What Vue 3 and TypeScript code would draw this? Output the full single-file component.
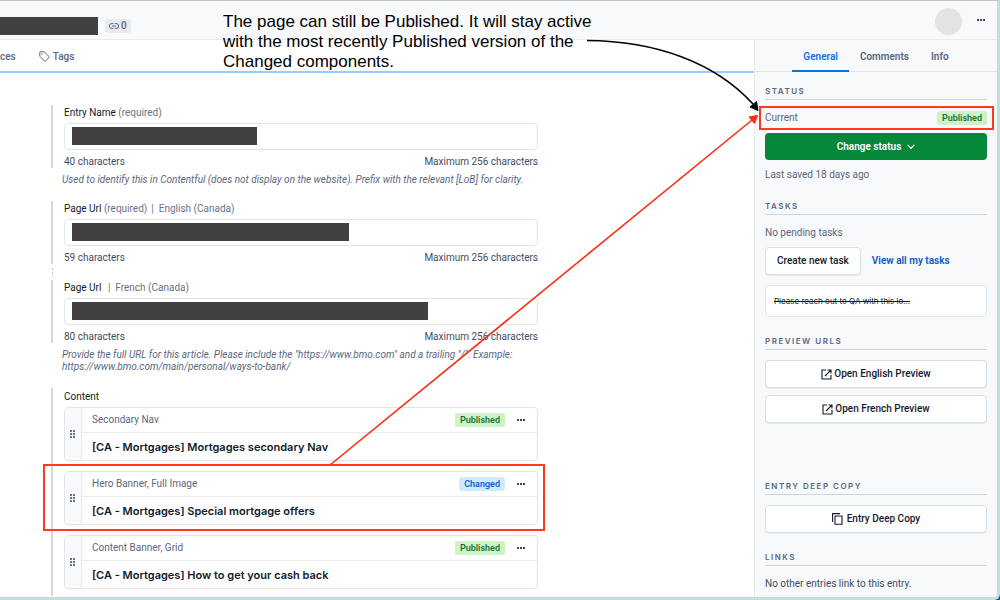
<script setup lang="ts">
interface Field {
  id: string
  label: string
  required: boolean
  locale: string
  count: number
  redacted: number
  hint: string
  linked: boolean
}

interface Entry {
  type: string
  title: string
  status: 'Published' | 'Changed'
}

const fields: Field[] = [
  {
    id: 'entry-name',
    label: 'Entry Name',
    required: true,
    locale: '',
    count: 40,
    redacted: 185,
    hint: 'Used to identify this in Contentful (does not display on the website). Prefix with the relevant [LoB] for clarity.',
    linked: false,
  },
  { id: 'url-en', label: 'Page Url', required: true, locale: 'English (Canada)', count: 59, redacted: 277, hint: '', linked: true },
  {
    id: 'url-fr',
    label: 'Page Url',
    required: false,
    locale: 'French (Canada)',
    count: 80,
    redacted: 356,
    hint: 'Provide the full URL for this article. Please include the "https://www.bmo.com" and a trailing "/". Example: https://www.bmo.com/main/personal/ways-to-bank/',
    linked: false,
  },
]

const entries: Entry[] = [
  { type: 'Secondary Nav', title: '[CA - Mortgages] Mortgages secondary Nav', status: 'Published' },
  { type: 'Hero Banner, Full Image', title: '[CA - Mortgages] Special mortgage offers', status: 'Changed' },
  { type: 'Content Banner, Grid', title: '[CA - Mortgages] How to get your cash back', status: 'Published' },
]
</script>

<template>
  <div class="page">
    <div class="frame">
      <header class="topbar">
        <span class="title-redacted"></span>
        <span class="link-count">
          <svg width="10" height="8" viewBox="0 0 10 8" fill="none" stroke="currentColor" stroke-width="1">
            <path d="M4.3 1.5H2.9a2.4 2.4 0 0 0 0 5h1.4M5.7 1.5h1.4a2.4 2.4 0 0 1 0 5H5.7M3 4h4" />
          </svg>
          0
        </span>
        <span class="avatar"></span>
        <button class="dots" aria-label="More actions"><i></i><i></i><i></i></button>
      </header>

      <div class="columns">
        <main class="editor">
          <nav class="editor-tabs">
            <a href="#">ces</a>
            <a href="#">
              <svg width="11" height="11" viewBox="0 0 11 11" fill="none" stroke="currentColor" stroke-width="1" stroke-linejoin="round">
                <path d="M.8 1.2 1.2.8 5.4.8 10 5.6a.8.8 0 0 1 0 1L6.5 10a.8.8 0 0 1-1 0L.8 5.2z" />
                <circle cx="3" cy="3" r=".7" fill="currentColor" stroke="none" />
              </svg>
              Tags
            </a>
          </nav>

          <div class="form">
            <template v-for="f in fields" :key="f.id">
              <div class="field">
                <label class="label" :for="f.id">
                  {{ f.label }} <span v-if="f.required" class="muted">(required)</span>
                  <span v-if="f.locale" class="muted"><span class="bar">|</span>{{ f.locale }}</span>
                </label>
                <div class="input-wrap">
                  <input :id="f.id" type="text" />
                  <span class="redacted" :style="{ width: f.redacted + 'px' }"></span>
                </div>
                <div class="counts"><span>{{ f.count }} characters</span><span>Maximum 256 characters</span></div>
              </div>
              <div v-if="f.linked" class="link-dots"></div>
              <p v-if="f.hint" class="hint">{{ f.hint }}</p>
            </template>

            <div class="field content">
              <div class="label">Content</div>
              <div class="cards">
                <article v-for="e in entries" :key="e.title" class="card" :class="{ marked: e.status === 'Changed' }">
                  <div class="handle">
                    <svg width="6" height="8" viewBox="0 0 6 8" fill="#66738a">
                      <path d="M0 0h2v2H0zM3 0h2v2H3zM0 3h2v2H0zM3 3h2v2H3zM0 6h2v2H0zM3 6h2v2H3z" />
                    </svg>
                  </div>
                  <div class="card-main">
                    <div class="card-head">
                      <span class="type">{{ e.type }}</span>
                      <span class="badge" :class="e.status.toLowerCase()">{{ e.status }}</span>
                      <button class="dots" aria-label="Entry actions"><i></i><i></i><i></i></button>
                    </div>
                    <h3>{{ e.title }}</h3>
                  </div>
                </article>
              </div>
            </div>
          </div>
        </main>

        <aside class="sidebar">
          <nav class="side-tabs">
            <a href="#" class="active">General</a>
            <a href="#">Comments</a>
            <a href="#">Info</a>
          </nav>
          <div class="side-body">
            <section>
              <h2>Status</h2>
              <div class="status-row marked">
                <span>Current</span><span class="badge published">Published</span>
              </div>
              <button class="primary">
                Change status
                <svg width="8" height="6" viewBox="0 0 8 6" fill="none" stroke="currentColor" stroke-width="1.2" stroke-linecap="round">
                  <path d="M1 1.2 4 4.4 7 1.2" />
                </svg>
              </button>
              <p class="saved">Last saved 18 days ago</p>
            </section>

            <section>
              <h2>Tasks</h2>
              <p class="text">No pending tasks</p>
              <div class="task-actions">
                <button class="secondary">Create new task</button>
                <a href="#">View all my tasks</a>
              </div>
              <div class="task"><s>Please reach out to QA with this lo...</s></div>
            </section>

            <section class="previews">
              <h2>Preview URLs</h2>
              <div class="stack">
                <button v-for="lang in ['English', 'French']" :key="lang" class="secondary">
                  <svg width="11" height="11" viewBox="0 0 11 11" fill="none" stroke="currentColor" stroke-width="1.1">
                    <path d="M5 1H1v9h9V6M6.5 1H10v3.500M10 1 4 7" />
                  </svg>
                  Open {{ lang }} Preview
                </button>
              </div>
            </section>

            <section>
              <h2>Entry deep copy</h2>
              <div class="stack">
                <button class="secondary copy">
                  <svg width="11" height="12" viewBox="0 0 11 12" fill="none" stroke="currentColor" stroke-width="1.1">
                    <path d="M.6 9V.6H8M3 3h7v8.300H3z" />
                  </svg>
                  Entry Deep Copy
                </button>
              </div>
            </section>

            <section>
              <h2>Links</h2>
              <p class="text dark">No other entries link to this entry.</p>
            </section>
          </div>
        </aside>
      </div>
    </div>

    <p class="note">
      The page can still be Published. It will stay active<br />with the most recently Published version of the<br />Changed components.
    </p>
    <svg class="arrows" width="1000" height="600" viewBox="0 0 1000 600" fill="none">
      <path d="M587 40.500C655 41 715 62 753 104" stroke="#000" stroke-width="1.600" />
      <path d="M758 110.500 750 107 756.500 101.500z" fill="#000" stroke="#000" />
      <path d="M330 465 752 120" stroke="#fb2c12" stroke-width="1.600" />
      <path d="M757.500 115.500 749 117 754.500 123.500z" fill="#fb2c12" stroke="#fb2c12" />
    </svg>
  </div>
</template>

<style>
body {
  margin: 0;
}
</style>

<style scoped>
* {
  box-sizing: border-box;
}
.page {
  position: relative;
  display: flex;
  min-height: 100vh;
  padding-bottom: 1px;
  overflow: hidden;
  font-family: Roboto, "Liberation Sans", sans-serif;
  font-size: 10px;
  line-height: 14px;
  color: #5a6780;
  background: linear-gradient(to right, #f0f6f8 calc(100% - 5px), #1d5f8c 0);
}
.frame {
  flex: 1;
  display: flex;
  flex-direction: column;
  background: #fff;
  border-top: 1px solid #bfc1c5;
  border-right: 3px solid #c6dde0;
  border-bottom: 3px solid #c6dde0;
  border-bottom-right-radius: 6px;
  overflow: hidden;
}
p,
h2,
h3 {
  margin: 0;
}
a {
  color: inherit;
  text-decoration: none;
}
button {
  display: flex;
  align-items: center;
  justify-content: center;
  padding: 0;
  border: 0;
  background: none;
  font: inherit;
  font-weight: 500;
}
svg {
  flex: none;
}

.topbar {
  display: flex;
  align-items: center;
  height: 39px;
  padding: 0 12px 0 0;
  background: #f7f9fa;
  border-bottom: 1px solid #e7ebee;
}
.title-redacted {
  width: 98px;
  height: 18px;
  margin-top: 12px;
  background: #414142;
}
.link-count {
  display: flex;
  align-items: center;
  gap: 2px;
  margin: 12px auto 0 7px;
  padding: 0 4px;
  border-radius: 3px;
  background: #e7ebee;
  font-weight: 500;
}
.avatar {
  width: 27px;
  height: 27px;
  margin: 2px 15px 0 0;
  border-radius: 50%;
  background: #e3e3e3;
}
.dots {
  gap: 1px;
  height: 10px;
  color: #3a465a;
}
.dots i {
  width: 2px;
  height: 2px;
  background: currentColor;
}

.columns {
  flex: 1;
  display: flex;
}
.editor {
  flex: 1;
  min-width: 0;
}
.editor-tabs {
  display: flex;
  align-items: center;
  gap: 23px;
  height: 33px;
  padding-top: 2px;
  border-bottom: 2px solid #98cbff;
  font-weight: 500;
}
.editor-tabs a {
  display: flex;
  align-items: center;
  gap: 3px;
}

.form {
  max-width: 487px;
  margin: 32px 0 0 51px;
}
.field {
  padding-left: 11px;
  border-left: 2px solid #cfd9e0;
}
.label {
  display: block;
  margin-bottom: 2px;
  line-height: 16px;
  color: #111b2b;
}
.muted {
  color: #67728a;
}
.bar {
  margin: 0 5px 0 4px;
}
.input-wrap {
  position: relative;
}
input {
  display: block;
  width: 100%;
  height: 27px;
  padding: 0 8px;
  border: 1px solid #dfe6ea;
  border-radius: 4px;
  background: #fff;
  font: inherit;
}
.redacted {
  position: absolute;
  left: 8px;
  top: 4px;
  height: 18px;
  background: #414142;
}
.counts {
  display: flex;
  justify-content: space-between;
  margin-top: 6px;
  line-height: 12px;
  color: #414d63;
}
.hint {
  margin: 6px 0 15px 11px;
  line-height: 12px;
  font-style: italic;
}
.link-dots {
  width: 3px;
  height: 10px;
  margin: 3px 0;
  background: radial-gradient(circle, #b9c9d2 1px, transparent 1px) 0 0 / 3px 4px;
}
.content {
  padding-top: 1px;
  padding-bottom: 7px;
}
.cards {
  display: grid;
  gap: 10px;
}
.card {
  position: relative;
  display: flex;
  height: 54px;
  border: 1px solid #dfe6ea;
  border-radius: 4px;
}
.marked {
  position: relative;
}
.marked::after {
  content: "";
  position: absolute;
  border: 2px solid #fb3a22;
}
.card.marked::after {
  inset: -8px -8px -7px -22px;
}
.handle {
  display: flex;
  align-items: center;
  justify-content: center;
  width: 17px;
  background: #f7f9fa;
  border-right: 1px solid #e7ebee;
  border-radius: 3px 0 0 3px;
}
.card-main {
  flex: 1;
}
.card-head {
  display: flex;
  align-items: center;
  height: 25px;
  padding: 0 12px 0 10px;
  border-bottom: 1px solid #e7ebee;
}
.type {
  flex: 1;
}
.card-head .dots {
  margin-left: 12px;
}
h3 {
  padding-left: 10px;
  font-family: Inter, "Liberation Sans", sans-serif;
  font-size: 11px;
  line-height: 28px;
  font-weight: 600;
  color: #111b2b;
}
.badge {
  padding: 0 5px;
  border-radius: 3px;
  font-size: 9px;
  font-weight: 600;
}
.published {
  color: #16753a;
  background: #cdf3c6;
}
.changed {
  color: #0c5fd0;
  background: #ceecff;
}

.sidebar {
  width: 243px;
  flex: none;
  background: #f7f9fa;
  border-left: 1px solid #e7ebee;
}
.side-tabs {
  display: flex;
  justify-content: center;
  height: 32px;
  border-bottom: 1px solid #e0e5e9;
  font-weight: 600;
}
.side-tabs a {
  height: 32px;
  padding: 0 11px;
  line-height: 33px;
}
.side-tabs .active {
  color: #1170e4;
  border-bottom: 2px solid #1170e4;
}
.side-body {
  display: flex;
  flex-direction: column;
  gap: 18px;
  padding: 13px 10px 5px;
}
.previews {
  margin-bottom: 39px;
}
h2 {
  padding-bottom: 2px;
  border-bottom: 1px solid #cad5dd;
  font-family: Inter, "Liberation Sans", sans-serif;
  font-size: 8px;
  line-height: 12px;
  font-weight: 600;
  letter-spacing: 1.5px;
  text-transform: uppercase;
}
.status-row {
  display: flex;
  align-items: center;
  justify-content: space-between;
  height: 24px;
  margin: 6px 0 3px;
}
.status-row.marked::after {
  inset: 0 -7px 0 -6px;
}
.primary {
  gap: 6px;
  width: 100%;
  height: 27px;
  border-radius: 4px;
  background: #058739;
  color: #fff;
  font-weight: 600;
}
.saved {
  margin-top: 8px;
}
.text {
  margin-top: 10px;
  line-height: 16px;
}
.dark {
  color: #414d63;
}
.task-actions {
  display: flex;
  align-items: center;
  gap: 11px;
  margin: 6px 0 10px;
}
.task-actions a {
  color: #0a5bc8;
  font-weight: 600;
}
.secondary {
  gap: 2px;
  height: 28px;
  padding: 0 11px;
  border: 1px solid #d8dfe5;
  border-radius: 4px;
  background: #fff;
  color: #111b2b;
  box-shadow: 0 1px 0 #e7ebee;
}
.copy {
  gap: 4px;
}
.task {
  height: 32px;
  padding: 0 8px;
  border: 1px solid #dfe6ea;
  border-radius: 4px;
  background: #fff;
  color: #111b2b;
  font-family: Inter, "Liberation Sans", sans-serif;
  font-size: 8px;
  line-height: 30px;
}
.stack {
  display: grid;
  gap: 7px;
  margin-top: 10px;
}

.note {
  position: absolute;
  left: 223px;
  top: 12px;
  font-family: "Liberation Sans", Arial, sans-serif;
  font-size: 17px;
  line-height: 20px;
  color: #000;
  white-space: nowrap;
}
.arrows {
  position: absolute;
  left: 0;
  top: 0;
  pointer-events: none;
}
</style>
